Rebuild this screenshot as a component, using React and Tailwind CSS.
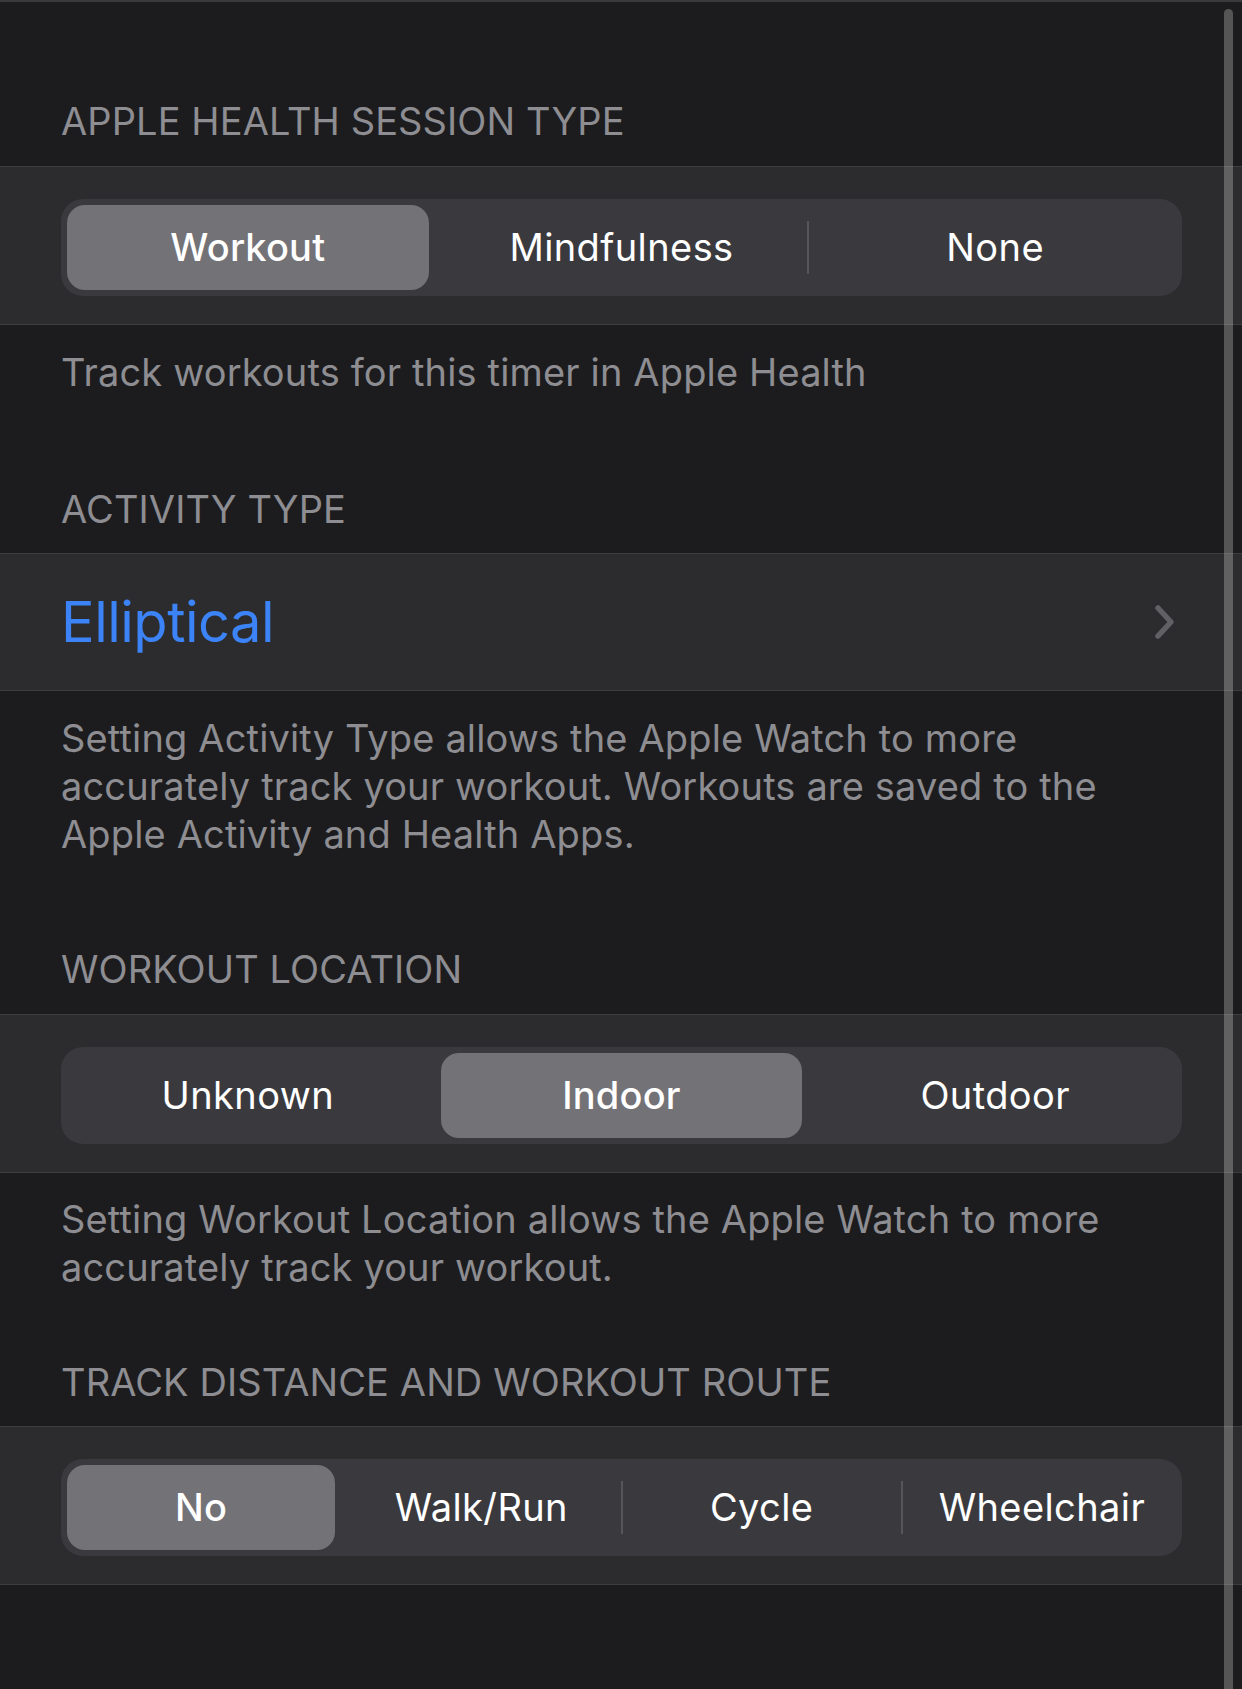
const SEG_COLS = { 3: 'grid-cols-3', 4: 'grid-cols-4' };

const Segmented = ({ items, selected }) => {
  return (
    <div className={`grid ${SEG_COLS[items.length]} h-[97px] rounded-[22px] bg-[#3a3a3e]`}>
      {items.map((item, i) => {
        const showDivider = i > 0 && i !== selected && i - 1 !== selected;
        return (
          <div key={item} className="relative flex p-[6px]">
            {showDivider && (
              <div className="absolute left-[-1px] top-[22px] h-[53px] w-[2px] bg-[#56555a]" />
            )}
            <div
              className={`flex flex-1 items-center justify-center rounded-[18px] text-[38px] text-white ${
                i === selected ? 'bg-[#737277] font-medium tracking-[0.2px]' : 'font-normal tracking-[0.4px]'
              }`}
            >
              {item}
            </div>
          </div>
        );
      })}
    </div>
  );
};

const Header = ({ children, className }) => (
  <div className={`px-[61px] text-[38px] leading-[46px] tracking-[0.1px] uppercase text-[#8d8d92] ${className}`}>
    {children}
  </div>
);

const Footer = ({ children, className }) => (
  <div className={`px-[61px] text-[38px] leading-[48px] tracking-[0.15px] text-[#8d8d92] ${className}`}>
    {children}
  </div>
);

const Group = ({ children, className }) => (
  <div className={`border-y border-[#3d3d40] bg-[#2c2c2e] ${className}`}>{children}</div>
);

export default function App() {
  return (
    <div className="relative min-h-[1689px] overflow-hidden bg-[#1c1c1e] font-['Inter','Liberation_Sans',sans-serif]">
      <div className="h-[2px] bg-[#3a3a3c]" />

      <Header className="pt-[96px] pb-[22px]">Apple Health Session Type</Header>
      <Group className="pt-[32px] pb-[28px] pl-[61px] pr-[60px]">
        <Segmented items={['Workout', 'Mindfulness', 'None']} selected={0} />
      </Group>
      <Footer className="pt-[23px]">Track workouts for this timer in Apple Health</Footer>

      <Header className="pt-[90px] pb-[21px]">Activity Type</Header>
      <Group className="flex h-[138px] items-center justify-between pl-[61px] pr-[66px]">
        <span className="text-[56px] tracking-[-0.5px] text-[#3b83f6]">Elliptical</span>
        <svg width="22" height="36" viewBox="0 0 22 36" fill="none">
          <path
            d="M4 4 L17 18 L4 32"
            stroke="#616065"
            strokeWidth="5.5"
            strokeLinecap="round"
            strokeLinejoin="round"
          />
        </svg>
      </Group>
      <Footer className="pt-[23px]">
        Setting Activity Type allows the Apple Watch to more
        <br />
        accurately track your workout. Workouts are saved to the
        <br />
        Apple Activity and Health Apps.
      </Footer>

      <Header className="pt-[88px] pb-[22px]">Workout Location</Header>
      <Group className="pt-[32px] pb-[28px] pl-[61px] pr-[60px]">
        <Segmented items={['Unknown', 'Indoor', 'Outdoor']} selected={1} />
      </Group>
      <Footer className="pt-[22px]">
        Setting Workout Location allows the Apple Watch to more
        <br />
        accurately track your workout.
      </Footer>

      <Header className="pt-[68px] pb-[21px]">Track Distance and Workout Route</Header>
      <Group className="pt-[32px] pb-[28px] pl-[61px] pr-[60px]">
        <Segmented items={['No', 'Walk/Run', 'Cycle', 'Wheelchair']} selected={0} />
      </Group>

      <div className="absolute right-[9px] top-[9px] h-[1700px] w-[9px] rounded-full bg-white/25" />
    </div>
  );
}
